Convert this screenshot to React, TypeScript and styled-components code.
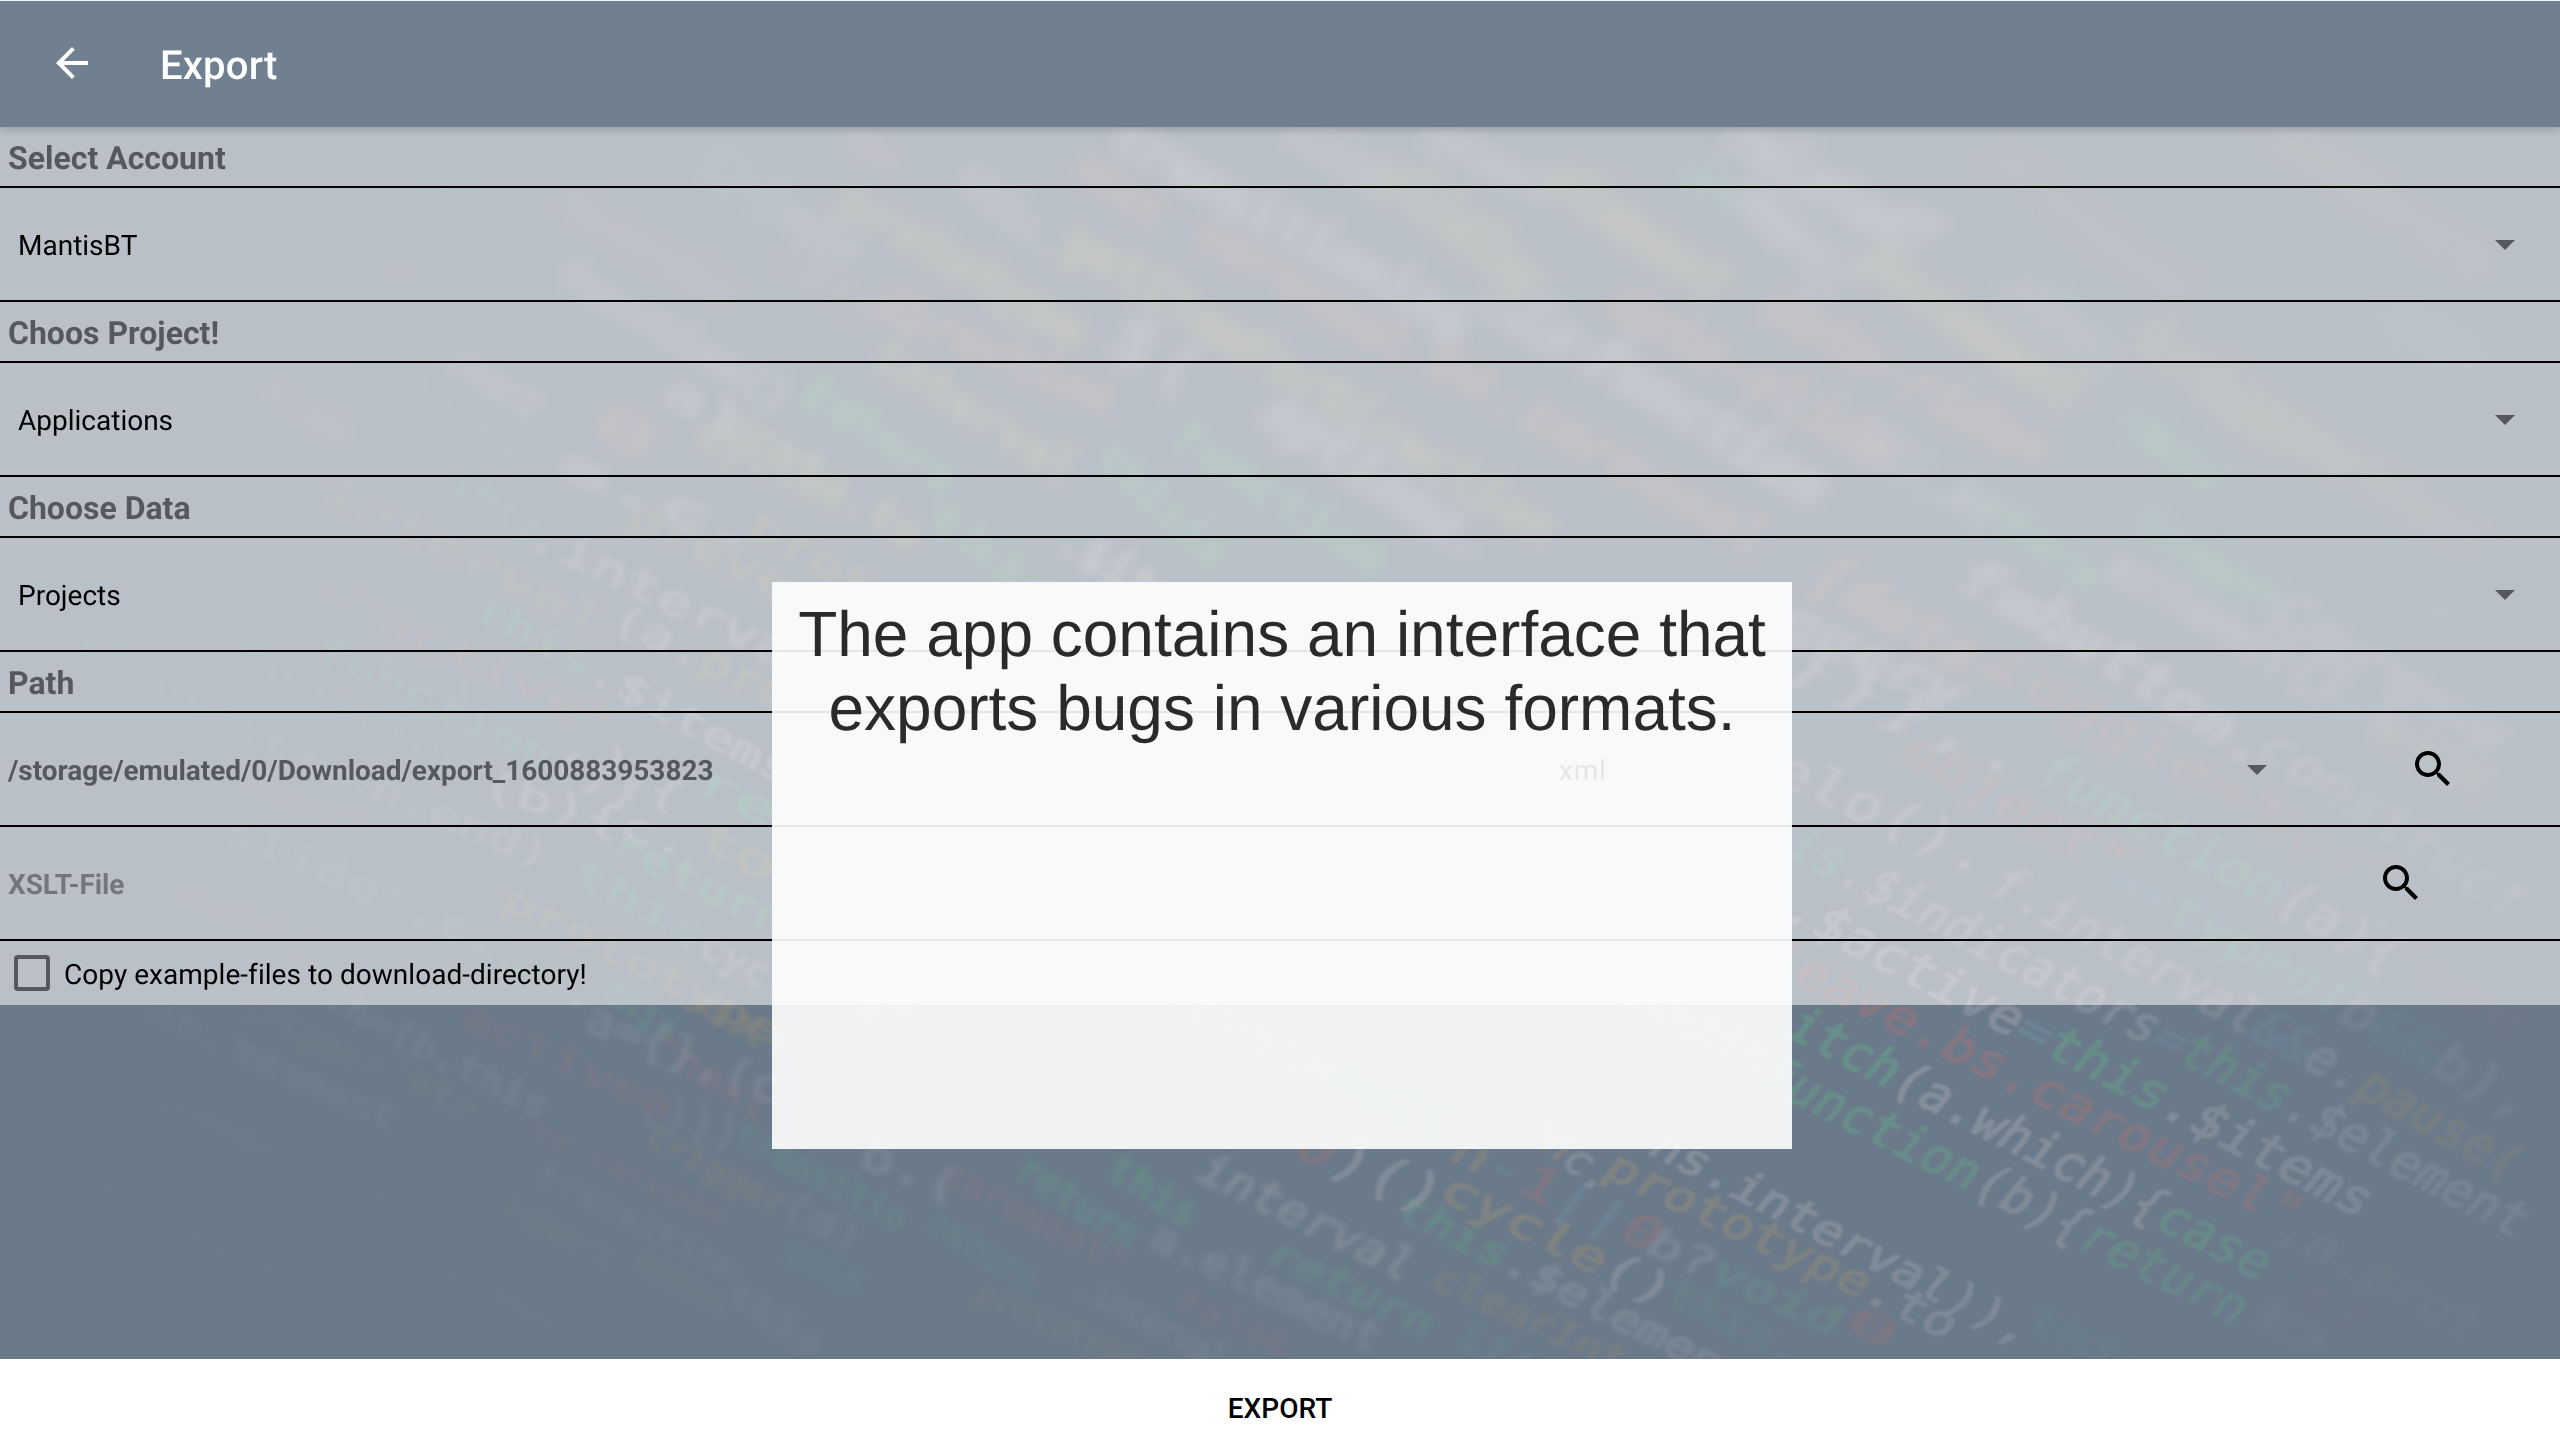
import React from "react";
import styled, { createGlobalStyle } from "styled-components";

const GlobalStyle = createGlobalStyle`
  *, *::before, *::after { box-sizing: border-box; }
  html, body, #root { margin: 0; height: 100%; }
  body { overflow: hidden; font-family: Roboto, "Noto Sans", sans-serif; text-rendering: geometricPrecision; }
  button { font: inherit; color: inherit; background: none; border: 0; padding: 0; }
`;

const Screen = styled.div`
  position: relative;
  display: flex;
  flex-direction: column;
  width: 2560px;
  height: 1450px;
  overflow: hidden;
  border-top: 1px solid #f4f6f7;
  background: #6b7a8a;
`;

const Wallpaper = styled.svg`
  position: absolute;
  top: -1px;
  left: 0;
  width: 2560px;
  height: 1450px;
`;

const CodeText = styled.text<{ $blur: number; $size: number }>`
  font-family: "DejaVu Sans Mono", monospace;
  font-size: ${(p) => p.$size}px;
  font-weight: ${(p) => (p.$blur > 3.5 ? 700 : 400)};
  filter: blur(${(p) => p.$blur}px);
  white-space: pre;
`;

const AppBar = styled.header`
  position: relative;
  z-index: 1;
  display: flex;
  align-items: center;
  gap: 64px;
  height: 126px;
  padding-left: 48px;
  background: #708090;
  box-shadow: 0 2px 8px rgba(40, 40, 40, 0.25);
`;

const BackButton = styled.button`
  display: flex;
  margin-bottom: 2px;
  color: #fff;
`;

const Title = styled.h1`
  margin: 0;
  padding-top: 3px;
  font-size: 40px;
  font-weight: 500;
  line-height: 48px;
  letter-spacing: 0.2px;
  color: #fff;
`;

const Form = styled.main`
  position: relative;
  background: rgba(255, 255, 255, 0.53);
`;

const SectionLabel = styled.h2`
  height: 61px;
  margin: 0;
  padding: 12px 8px 0;
  border-bottom: 2px solid #000;
  font-size: 32px;
  font-weight: 700;
  line-height: 38px;
  color: rgba(0, 0, 0, 0.54);
`;

const Row = styled.div<{ $left?: number; $right?: number }>`
  display: flex;
  align-items: center;
  height: 114px;
  padding-left: ${(p) => p.$left ?? 8}px;
  padding-right: ${(p) => p.$right ?? 31}px;
  border-bottom: 2px solid #000;
`;

const Value = styled.span<{ $tone?: "strong" | "hint"; $tracking?: number }>`
  flex: 1;
  padding-top: 3px;
  font-size: 28px;
  line-height: 34px;
  letter-spacing: ${(p) => p.$tracking ?? 0}px;
  font-weight: ${(p) => (p.$tone ? 700 : 400)};
  color: ${(p) =>
    p.$tone === "strong" ? "rgba(0,0,0,0.54)" : p.$tone === "hint" ? "rgba(0,0,0,0.38)" : "#000"};
`;

const FormatSelect = styled.div`
  display: flex;
  align-items: center;
  width: 722px;
  margin-right: 128px;
`;

const CheckRow = styled.label`
  display: flex;
  align-items: center;
  gap: 14px;
  height: 64px;
  padding-left: 14px;
`;

const Box = styled.span`
  width: 36px;
  height: 36px;
  border: 4px solid #55595d;
  border-radius: 4px;
`;

const Footer = styled.button`
  position: relative;
  height: 91px;
  margin-top: auto;
  padding-top: 8px;
  background: #fff;
  font-size: 28px;
  font-weight: 500;
  color: #000;
`;

const Caption = styled.aside`
  position: absolute;
  z-index: 2;
  top: 581px;
  left: 772px;
  width: 1020px;
  height: 567px;
  padding-top: 15px;
  background: rgba(255, 255, 255, 0.9);
  font-family: "Liberation Sans", Arial, sans-serif;
  font-size: 64px;
  line-height: 74px;
  text-align: center;
  color: #2a2a2a;
`;

const Icon = ({ d, fill = "currentColor" }: { d: string; fill?: string }) => (
  <svg width="48" height="48" viewBox="0 0 24 24" fill={fill} aria-hidden="true">
    <path d={d} />
  </svg>
);

const BACK = "M20 11H7.83l5.59-5.59L12 4l-8 8 8 8 1.41-1.41L7.83 13H20v-2z";
const SEARCH =
  "M15.5 14h-.79l-.28-.27C15.41 12.59 16 11.11 16 9.5 16 5.91 13.09 3 9.5 3S3 5.91 3 9.5 5.91 16 9.5 16c1.61 0 3.09-.59 4.23-1.57l.27.28v.79l5 4.99L20.49 19l-4.99-5zm-6 0C7.01 14 5 11.99 5 9.5S7.01 5 9.5 5 14 7.01 14 9.5 11.99 14 9.5 14z";
const Caret = () => <Icon d="M7 10l5 5 5-5z" fill="#55595d" />;

const INK: Record<string, string> = {
  w: "#87919c",
  g: "#68918a",
  y: "#85867f",
  r: "#877882",
  t: "#6c8799",
};

const FAR_INK: Record<string, string> = {
  w: "#878f9d",
  g: "#6c8c89",
  y: "#848985",
  r: "#867f89",
  t: "#6c8799",
};

// x1, y1, x2, y2, size, blur, opacity, then "ink:text" runs separated by "|"
type Line = [number, number, number, number, number, number, number, string];

const LINES: Line[] = [
  // far, out-of-focus rows
  [848, 135, 900, 160, 50, 6, 0.7, "r:ow"],
  [1115, 130, 1470, 325, 58, 7, 0.95, "w:transitioning"],
  [1290, 130, 1400, 190, 50, 8, 0.7, "w:slide"],
  [1430, 130, 1560, 195, 54, 8, 0.7, "w:event"],
  [1388, 170, 1540, 285, 62, 8, 1, "y:sliding"],
  [1554, 170, 1725, 290, 62, 8, 1, "y:element"],
  [1732, 130, 1932, 245, 66, 8, 0.95, "w:relatedT"],
  [1685, 165, 1768, 215, 54, 8, 0.8, "g:var"],
  [1080, 160, 1163, 220, 50, 7, 0.9, "r:next"],
  [842, 195, 1085, 335, 54, 7, 1, "y:prototype"],
  [960, 170, 1060, 250, 50, 7, 0.6, "w:this."],
  [1068, 235, 1554, 533, 56, 6, 1, "y:getItemForDirection"],
  [1198, 225, 1412, 353, 56, 7, 0.95, "r:carousel"],
  [878, 300, 1113, 402, 52, 6, 0.95, "r:direction"],
  [1435, 355, 1768, 545, 58, 6, 1, "r:bs.carousel"],
  [1490, 310, 1560, 350, 60, 8, 0.6, "w:==="],
  [1590, 350, 1825, 495, 60, 7, 1, "w:function"],
  [1613, 298, 1892, 455, 60, 7, 1, "r:data-slide"],
  [1768, 300, 2046, 455, 60, 7, 1, "r:data-ride="],
  [1863, 250, 2080, 400, 60, 8, 1, "y:document"],
  [2135, 330, 2365, 475, 60, 9, 0.8, "y:trigger"],
  [2123, 415, 2225, 485, 54, 8, 0.85, "g:this"],
  [1957, 480, 2100, 585, 54, 7, 0.85, "g:return"],
  [2135, 510, 2270, 600, 54, 8, 0.7, "g:typeof"],
  [1270, 405, 1490, 550, 62, 7, 1, "w:options."],
  [1175, 430, 1385, 565, 54, 5, 1, "g:function"],
  [807, 385, 955, 485, 50, 5, 1, "g:return"],
  [878, 350, 1075, 475, 50, 5, 1, "y:interval"],
  [724, 415, 920, 540, 48, 4, 1, "y:proto.to"],
  [1103, 450, 1225, 560, 50, 5, 1, "g:thisis"],
  [930, 510, 1060, 605, 46, 4, 1, "g:this"],
  [1060, 535, 1200, 620, 48, 4, 1, "w:.$item"],
  [1115, 330, 1200, 380, 70, 6, 0.8, "w:$("],
  [1744, 185, 1850, 290, 58, 9, 0.85, "w:test("],
  [2278, 130, 2490, 275, 56, 12, 0.6, "y:attr(t"],
  [2372, 290, 2480, 360, 56, 12, 0.5, "w:.pa"],
  [2010, 280, 2130, 370, 54, 11, 0.5, "w:show."],
  [2000, 150, 2190, 300, 54, 11, 0.5, "r:preventD"],
  [2370, 470, 2480, 548, 54, 10, 0.5, "y:dat"],
  [1860, 430, 2000, 520, 56, 8, 0.6, "w:)}),a("],
  [1480, 280, 1620, 370, 60, 8, 0.7, "w:.fn."],
  [565, 200, 740, 300, 44, 8, 0.7, "r:Modernizr"],
  [560, 270, 790, 400, 48, 6, 0.8, "w:function()"],
  [428, 185, 525, 260, 44, 8, 0.6, "g:return"],
  [455, 355, 540, 410, 46, 5, 0.75, "w:next"],
  [356, 355, 548, 465, 42, 6, 0.6, "g:this.$el"],
  [268, 385, 350, 440, 40, 6, 0.6, "y:slide"],
  [595, 415, 655, 450, 58, 4, 0.9, "r:0"],
  [668, 385, 740, 430, 50, 4, 0.8, "w:a)"],
  [800, 385, 860, 430, 50, 4, 0.8, "g:if"],
  [700, 430, 850, 500, 46, 4, 0.85, "y:cycle("],
  [700, 150, 860, 260, 50, 8, 0.6, "w:(){var"],
  [780, 250, 870, 320, 48, 7, 0.5, "r:left"],
  [240, 190, 420, 280, 40, 8, 0.3, "r:transition"],
  [130, 250, 300, 340, 38, 8, 0.25, "r:active"],
  // left, middle distance
  [324, 487, 604, 625, 40, 2.5, 0.75, "y:interval"],
  [614, 615, 790, 700, 40, 2, 0.9, "w:(a.|y:pro"],
  [530, 530, 790, 655, 42, 2.5, 0.9, "w:.interva"],
  [631, 510, 790, 590, 44, 3, 0.9, "y:preve"],
  [755, 520, 870, 590, 44, 3, 0.9, "y:prot"],
  [455, 478, 540, 532, 42, 3.5, 0.8, "g:this"],
  [560, 460, 760, 540, 46, 4, 0.8, "w:a.c."],
  [477, 605, 790, 775, 38, 1.5, 0.85, "g:this|w:.$items"],
  [378, 618, 615, 728, 36, 1.8, 0.75, "r:active\""],
  [318, 648, 640, 800, 36, 1.5, 0.75, "g:function|w:()}"],
  [238, 650, 470, 770, 34, 1.8, 0.5, "g:function"],
  [75, 640, 385, 800, 34, 2, 0.4, "w:transition"],
  [373, 785, 548, 858, 36, 1.5, 0.7, "w:n.end)"],
  [226, 828, 500, 945, 36, 1.5, 0.6, "w:slide',c."],
  [483, 782, 690, 845, 38, 1.5, 0.85, "w:(b){c."],
  [600, 755, 680, 800, 38, 1.5, 0.8, "w:)){"],
  [614, 840, 785, 925, 38, 1.5, 0.9, "g:return"],
  [575, 870, 705, 938, 36, 1.5, 0.8, "g:this"],
  [505, 895, 780, 1035, 36, 1.5, 0.8, "y:prototype"],
  [245, 780, 370, 830, 32, 2, 0.4, "r:next\""],
  [700, 775, 775, 815, 42, 1.5, 0.9, "g:re"],
  [700, 830, 775, 870, 42, 1.5, 0.8, "y:to"],
  [150, 870, 320, 945, 30, 2.5, 0.3, "r:'left'"],
  [160, 880, 380, 1000, 30, 2.5, 0.35, "y:hasClass("],
  [370, 660, 480, 700, 36, 3, 0.3, "w:(a)"],
  [40, 790, 220, 870, 30, 3, 0.25, "y:type.be"],
  [130, 580, 380, 720, 34, 3, 0.3, "r:item.next("],
  [270, 560, 440, 640, 36, 3, 0.35, "r:'.item'"],
  [440, 920, 560, 985, 36, 2, 0.5, "g:func"],
  [680, 930, 790, 990, 40, 2, 0.8, "w:.cycl"],
  // lower left, falling out of focus again
  [605, 985, 675, 1035, 36, 2.5, 0.8, "g:this"],
  [700, 995, 800, 1055, 42, 2.5, 0.8, "y:ext"],
  [464, 1013, 672, 1110, 34, 2.5, 0.6, "r:activea"],
  [325, 995, 547, 1110, 34, 2.5, 0.5, "w:.h=(b,this"],
  [655, 1042, 790, 1125, 36, 2.5, 0.7, "r:\"next\""],
  [560, 1005, 780, 1090, 44, 2.5, 0.6, "w:'a={},(c"],
  [390, 1060, 475, 1115, 32, 3, 0.45, "y:'str"],
  [240, 1050, 395, 1120, 32, 3, 0.4, "w:element"],
  [150, 1005, 280, 1070, 32, 3, 0.3, "w:bb.tr"],
  [240, 1000, 380, 1070, 32, 3, 0.35, "y:trigger"],
  [531, 1127, 728, 1218, 30, 3, 0.5, "r:bs.carouse"],
  [647, 1133, 785, 1207, 34, 3, 0.6, "y:trigger"],
  [738, 1132, 905, 1222, 36, 3, 0.65, "g:transitio"],
  [640, 1105, 740, 1135, 46, 3, 0.45, "w:.)))"],
  [862, 1150, 960, 1190, 44, 3, 0.65, "w:b.("],
  [945, 1170, 1125, 1265, 36, 3, 0.6, "r:carousel\""],
  [1020, 1165, 1135, 1240, 40, 3, 0.8, "g:return"],
  [1111, 1165, 1195, 1218, 40, 3, 0.85, "g:this"],
  [1202, 1165, 1412, 1270, 44, 2.5, 0.75, "w:interval"],
  [929, 1218, 1035, 1283, 34, 3.5, 0.5, "g:return"],
  [539, 1172, 738, 1272, 30, 3.5, 0.3, "w:transition"],
  [506, 1202, 612, 1260, 30, 3.5, 0.35, "y:support"],
  [785, 1200, 860, 1245, 38, 3.5, 0.4, "w:(d)"],
  [785, 1250, 860, 1285, 32, 4, 0.3, "g:slid"],
  [978, 1292, 1140, 1360, 34, 3.5, 0.4, "y:prototype"],
  [1078, 1282, 1225, 1362, 36, 3.5, 0.4, "w:.interval"],
  [1153, 1232, 1380, 1340, 42, 3, 0.55, "w:a.element"],
  [1177, 1300, 1290, 1345, 36, 3.5, 0.45, "r:false"],
  [638, 1258, 725, 1305, 28, 4, 0.3, "y:option"],
  [60, 1050, 280, 1150, 28, 4, 0.12, "y:getItemFor"],
  [200, 1120, 400, 1210, 28, 4, 0.18, "r:type=\"next"],
  [80, 1180, 300, 1290, 28, 5, 0.1, "w:addClass(e)"],
  [440, 1260, 560, 1330, 28, 5, 0.2, "r:clear"],
  [730, 1290, 820, 1350, 34, 4, 0.25, "w:this"],
  // lower centre
  [1270, 1250, 1432, 1328, 40, 2.5, 0.65, "g:return"],
  [1400, 1205, 1720, 1367, 40, 2, 0.7, "g:this|w:.$elemen"],
  [1435, 1275, 1625, 1362, 38, 2.5, 0.55, "y:clearInt"],
  [1300, 1140, 1440, 1200, 52, 1.8, 0.75, "r:0|w:)()"],
  [1445, 1185, 1670, 1295, 44, 1.5, 0.8, "y:cycle|w:()"],
  [1455, 1145, 1660, 1240, 46, 1.8, 0.7, "y:n|w:|t:-|r:1|t:|||r:0"],
  [1650, 1240, 1840, 1325, 40, 2, 0.6, "w:b?|g:void"],
  [1530, 1120, 1610, 1185, 44, 1.5, 0.8, "y:on|w:c."],
  [1610, 1163, 1955, 1328, 44, 1.3, 0.8, "y:prototype|w:.to"],
  [1655, 1140, 2030, 1335, 44, 1.2, 0.85, "w:ns.interval)),"],
  [1850, 1315, 1895, 1340, 38, 2.5, 0.75, "r:0"],
  [1670, 1290, 1800, 1355, 38, 3, 0.4, "g:this."],
  [2030, 1315, 2150, 1375, 38, 3, 0.3, "g:this"],
  [1460, 1330, 1530, 1370, 38, 3, 0.4, "g:if("],
  // right, in focus
  [1770, 952, 2298, 1217, 48, 1.3, 0.95, "r:leave.bs.carousel\""],
  [1792, 1020, 2268, 1267, 50, 1.3, 0.95, "g:itch|w:(a.which){|g:case"],
  [1765, 1070, 2245, 1312, 50, 1.3, 0.85, "g:function|w:(b){|g:return"],
  [1760, 888, 2370, 1205, 50, 1.3, 0.9, "g:s|w:.$active|t:=|g:this|w:.$items"],
  [1765, 825, 2525, 1225, 50, 1.6, 0.75, "g:his|w:.$indicators|t:=|g:this|w:.$element"],
  [1995, 878, 2520, 1167, 50, 2, 0.75, "w:f.interval|t:&&|w:e.|y:pause("],
  [1775, 765, 1990, 862, 52, 2, 0.8, "w:elo()."],
  [2110, 873, 2350, 1003, 50, 2.5, 0.8, "t:==|g:typeof"],
  [2345, 1005, 2530, 1108, 50, 2.5, 0.5, "w:b|t:&&|w:b),"],
  [1876, 727, 2124, 867, 50, 2.5, 0.9, "r:\"object\""],
  [2040, 765, 2400, 960, 52, 2.5, 0.85, "g:function|w:(a){"],
  [1790, 655, 2030, 765, 54, 3, 0.8, "w:}}},."],
  [1785, 615, 1960, 700, 56, 4, 0.8, "w:query"],
  [1815, 570, 2010, 680, 60, 5, 1, "r:[data-"],
  [1995, 660, 2280, 820, 52, 3, 0.85, "r:toggle=\""],
  [2255, 810, 2400, 890, 50, 3.5, 0.6, "r:bur\""],
  [2040, 610, 2265, 755, 56, 4, 0.9, "w:button."],
  [1960, 570, 2080, 640, 56, 4.5, 0.8, "w:fm."],
  [2265, 740, 2525, 908, 54, 3.5, 0.7, "w:construct"],
  [2270, 600, 2510, 743, 54, 6, 0.6, "w:Carous"],
  [2110, 560, 2400, 720, 54, 6, 0.7, "w:extend({},c"],
  [2370, 725, 2490, 790, 48, 6, 0.5, "y:VER"],
  [2350, 925, 2525, 1030, 50, 3, 0.35, "w:(|r:\"use"],
  [2180, 560, 2290, 600, 50, 8, 0.5, "g:this"],
  [2380, 560, 2460, 620, 50, 8, 0.4, "g:new"],
  [2280, 1225, 2480, 1330, 44, 2.5, 0.28, "w:,a.|y:prot"],
  [2285, 1285, 2370, 1330, 44, 2.5, 0.3, "r:37"],
  [2370, 1200, 2500, 1290, 42, 3.5, 0.18, "r:next"],
  [2250, 1310, 2330, 1345, 40, 3, 0.2, "w:b"],
  // behind the caption
  [800, 620, 1250, 850, 46, 3, 0.8, "y:prototype|w:.slide=|g:func"],
  [1200, 600, 1700, 860, 52, 3, 0.8, "w:carousel(|y:options|w:),b."],
  [900, 860, 1450, 1130, 44, 2.5, 0.8, "w:(this.|y:interval|w:=|g:null"],
  [1300, 820, 1770, 1060, 48, 2, 0.8, "g:return this|w:.pause"],
  [800, 960, 1150, 1120, 42, 2.5, 0.7, "w:f,g=|r:\"active\""],
];

const parseRuns = (s: string) =>
  s
    .split(/\|(?=[wgyrt]:)/)
    .map((run) => ({ ink: run[0], text: run.slice(2) }))
    .filter((run) => run.text.length > 0);

const CodeWallpaper = () => (
  <Wallpaper viewBox="0 0 2560 1450" aria-hidden="true">
    <defs>
      <radialGradient id="vignette" gradientUnits="userSpaceOnUse" cx="1500" cy="640" r="1500" gradientTransform="translate(0 150) scale(1 0.77)">
        <stop offset="0.5" stopColor="#fff" />
        <stop offset="1" stopColor="#555" />
      </radialGradient>
      <mask id="fade" maskUnits="userSpaceOnUse" x="0" y="0" width="2560" height="1450">
        <rect width="2560" height="1450" fill="url(#vignette)" />
      </mask>
    </defs>
    <g mask="url(#fade)">
      {LINES.map(([x1, y1, x2, y2, size, blur, opacity, src], i) => {
        const angle = (Math.atan2(y2 - y1, x2 - x1) * 180) / Math.PI;
        const far = blur > 3.5;
        const ink = far ? FAR_INK : INK;
        return (
          <CodeText
            key={i}
            $blur={far ? blur * 1.15 : blur}
            $size={size}
            opacity={opacity}
            dominantBaseline="central"
            textLength={Math.hypot(x2 - x1, y2 - y1)}
            lengthAdjust="spacingAndGlyphs"
            transform={`translate(${x1} ${y1}) rotate(${angle}) skewX(${x1 > 1200 ? -12 : 0})`}
            strokeWidth={far ? blur * 0.9 : 1.8}
          >
            {parseRuns(src).map((run, j) => (
              <tspan key={j} fill={ink[run.ink]} stroke={ink[run.ink]}>
                {run.text}
              </tspan>
            ))}
          </CodeText>
        );
      })}
    </g>
  </Wallpaper>
);

const SELECTS = [
  { label: "Select Account", value: "MantisBT" },
  { label: "Choos Project!", value: "Applications" },
  { label: "Choose Data", value: "Projects" },
];

export default function App() {
  return (
    <>
      <GlobalStyle />
      <Screen>
        <CodeWallpaper />
        <AppBar>
          <BackButton aria-label="Back">
            <Icon d={BACK} />
          </BackButton>
          <Title>Export</Title>
        </AppBar>
        <Form>
          {SELECTS.map(({ label, value }) => (
            <React.Fragment key={label}>
              <SectionLabel>{label}</SectionLabel>
              <Row $left={18}>
                <Value>{value}</Value>
                <Caret />
              </Row>
            </React.Fragment>
          ))}
          <SectionLabel>Path</SectionLabel>
          <Row $right={103}>
            <Value $tone="strong" $tracking={-0.05}>
              /storage/emulated/0/Download/export_1600883953823
            </Value>
            <FormatSelect>
              <Value $tracking={0.8}>xml</Value>
              <Caret />
            </FormatSelect>
            <Icon d={SEARCH} />
          </Row>
          <Row $right={135}>
            <Value $tone="hint" $tracking={-0.1}>
              XSLT-File
            </Value>
            <Icon d={SEARCH} />
          </Row>
          <CheckRow>
            <Box />
            <Value $tracking={0.04}>Copy example-files to download-directory!</Value>
          </CheckRow>
        </Form>
        <Footer>EXPORT</Footer>
        <Caption>
          The app contains an interface that
          <br />
          exports bugs in various formats.
        </Caption>
      </Screen>
    </>
  );
}
